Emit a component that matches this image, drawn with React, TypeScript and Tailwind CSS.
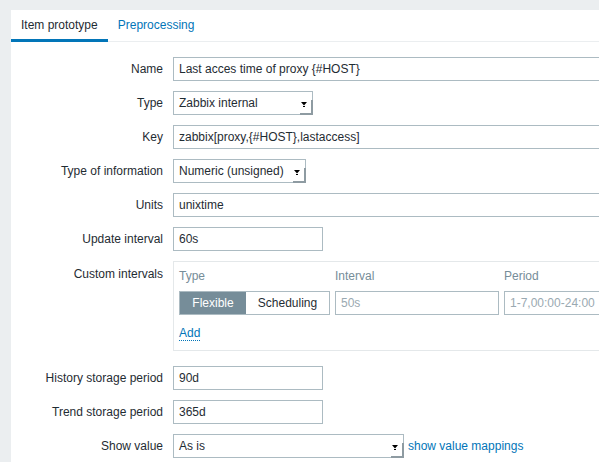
import React from 'react'

const font = { fontFamily: '"Liberation Sans", Arial, sans-serif' }

function Row({ label, children, className = '' }: { label: string; children: React.ReactNode; className?: string }) {
  return (
    <div className={`flex items-center ${className}`}>
      <div className="w-[162px] shrink-0 pr-[10px] text-right">{label}</div>
      <div className="flex items-center">{children}</div>
    </div>
  )
}

function TextInput({ value, width, placeholder }: { value: string; width: string; placeholder?: boolean }) {
  return (
    <div
      className={`${width} h-6 shrink-0 border border-[#acbbc2] bg-white pl-[5px] leading-[22px] whitespace-nowrap overflow-hidden ${
        placeholder ? 'text-[#9aa9b1]' : 'text-[#1f2c33]'
      }`}
    >
      {value}
    </div>
  )
}

function Select({ value, width }: { value: string; width: string }) {
  return (
    <div className={`${width} relative h-6 shrink-0 border border-[#acbbc2] bg-white pl-[5px] leading-[22px]`}>
      {value}
      {/* native-looking drop button shadow */}
      <span className="absolute -right-px -bottom-px h-[15px] w-[13px] border-r-2 border-b-2 border-[#8e9ba2]" />
      <svg className="absolute right-[5px] top-[10px]" width="6" height="6" viewBox="0 0 6 6">
        <path d="M0 0 H6 L3 3.5 Z" fill="#000" />
        <rect x="2" y="4" width="2" height="1" fill="#000" />
      </svg>
    </div>
  )
}

export default function App() {
  return (
    <div className="min-h-[462px] w-[599px] overflow-hidden bg-[#ebeef0] pt-[10px] pl-[11px] text-[12px] text-[#1f2c33]" style={font}>
      <div className="w-[620px] bg-white min-h-[452px]">
        {/* Tabs */}
        <div className="flex h-8 border-b border-[#ebeef0]">
          <div className="-mb-px flex h-8 items-center border-b-[3px] border-[#0275b8] px-[10px] pt-[1px]">Item prototype</div>
          <div className="flex h-8 items-center px-[10px] pb-[2px] text-[#0275b8]">Preprocessing</div>
        </div>

        {/* Form */}
        <div className="flex flex-col gap-[10px] pt-[15px]">
          <Row label="Name">
            <TextInput value="Last acces time of proxy {#HOST}" width="w-[453px]" />
          </Row>
          <Row label="Type">
            <Select value="Zabbix internal" width="w-[140px]" />
          </Row>
          <Row label="Key">
            <TextInput value="zabbix[proxy,{#HOST},lastaccess]" width="w-[453px]" />
          </Row>
          <Row label="Type of information">
            <Select value="Numeric (unsigned)" width="w-[133px]" />
          </Row>
          <Row label="Units">
            <TextInput value="unixtime" width="w-[453px]" />
          </Row>
          <Row label="Update interval">
            <TextInput value="60s" width="w-[150px]" />
          </Row>

          <div className="flex items-start">
            <div className="w-[162px] shrink-0 pr-[10px] pt-[4px] text-right">Custom intervals</div>
            <div className="h-[90px] w-[520px] shrink-0 border border-[#e4e8ea] pl-[5px] pt-[5px]">
              <div className="flex text-[#768d99]">
                <div className="w-[156px] shrink-0">Type</div>
                <div className="w-[169px] shrink-0">Interval</div>
                <div>Period</div>
              </div>
              <div className="mt-[6px] flex items-center">
                <div className="flex h-6 w-[151px] shrink-0 border border-[#acbbc2]">
                  <div className="flex w-[66px] shrink-0 items-center justify-center bg-[#768d99] text-white">Flexible</div>
                  <div className="flex flex-1 items-center justify-center">Scheduling</div>
                </div>
                <div className="ml-[5px] shrink-0">
                  <TextInput value="50s" width="w-[164px]" placeholder />
                </div>
                <div className="ml-[5px] shrink-0">
                  <TextInput value="1-7,00:00-24:00" width="w-[150px]" placeholder />
                </div>
              </div>
              <div className="mt-[10px] leading-4">
                <span className="border-b border-dotted border-[#0275b8] text-[#0275b8]">Add</span>
              </div>
            </div>
          </div>

          <Row label="History storage period" className="mt-[5px]">
            <TextInput value="90d" width="w-[150px]" />
          </Row>
          <Row label="Trend storage period">
            <TextInput value="365d" width="w-[150px]" />
          </Row>
          <Row label="Show value">
            <Select value="As is" width="w-[231px]" />
            <span className="ml-[4px] text-[#0275b8]">show value mappings</span>
          </Row>
        </div>
      </div>
    </div>
  )
}
